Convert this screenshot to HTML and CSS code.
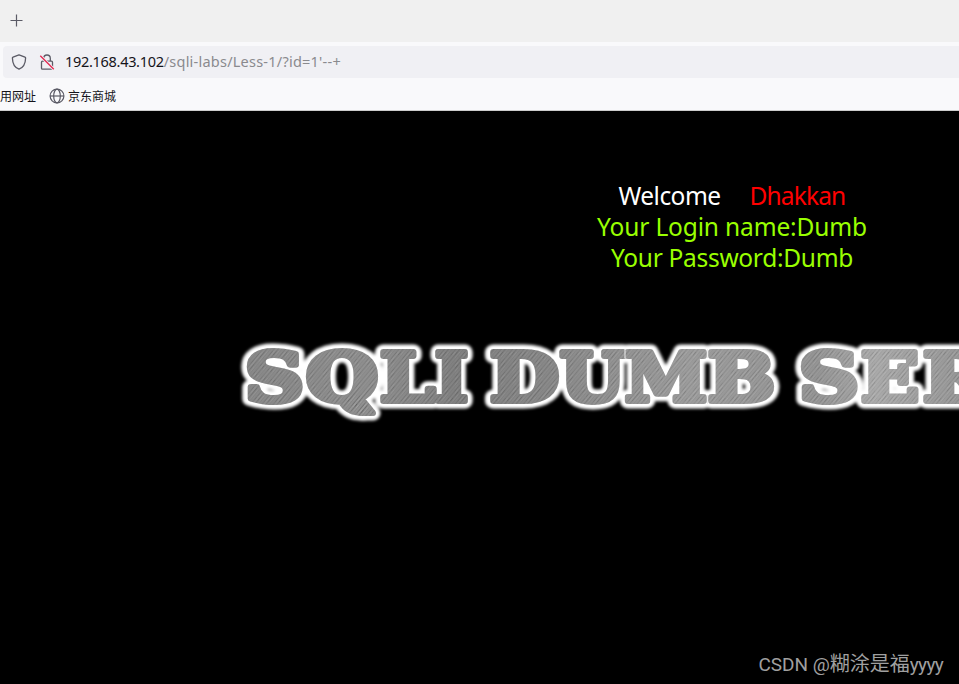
FILE: index.html
```
<!DOCTYPE html>
<html lang="zh-CN">
<head>
<meta charset="utf-8">
<title>Less-1</title>
<link rel="stylesheet" href="styles.css">
</head>
<body>
<div class="tabs">
  <svg class="plus" width="13" height="13" viewBox="0 0 13 13"><path d="M6.500 0.500v12M0.500 6.500h12" fill="none" stroke="#5b5b66" stroke-width="1.200"/></svg>
</div>
<div class="toolbar">
  <div class="urlbar">
    <svg class="shield" width="16" height="16" viewBox="0 0 16 16"><path d="M8 .8 14 3.1q.6.2.6.9C14.500 9.500 12.500 13.500 8 15.200 3.500 13.500 1.500 9.500 1.400 4q0-.7.6-.9Z" fill="none" stroke="#5b5b66" stroke-width="1.3" stroke-linejoin="round"/></svg>
    <svg class="lock" width="16" height="16" viewBox="0 0 16 16"><path d="M4.700 7V4.300a3.300 3.300 0 0 1 6.600 0V7M3.500 7.200h9a1 1 0 0 1 1 1v6a1 1 0 0 1-1 1h-9a1 1 0 0 1-1-1v-6a1 1 0 0 1 1-1Z" fill="none" stroke="#5b5b66" stroke-width="1.300"/><path d="m1.300 1.800 13.500 13.500" stroke="#f0f0f4" stroke-width="3"/><path d="m1.300 1.800 13.500 13.500" stroke="#e22850" stroke-width="1.300"/></svg>
    <div class="url"><span class="host">192.168.43.102</span><span class="path">/sqli-labs/Less-1/?id=1'--+</span></div>
  </div>
</div>
<div class="bookmarks">
  <span>用网址</span>
  <svg class="globe" width="16" height="16" viewBox="0 0 16 16"><g fill="none" stroke="#5b5b66" stroke-width="1.200"><circle cx="8" cy="8" r="6.900"/><ellipse cx="8" cy="8" rx="3.300" ry="6.900"/><path d="M1 8h14"/></g></svg>
  <span>京东商城</span>
</div>
<main class="page">
  <div class="message">
    <div class="line welcome"><span class="hello">Welcome</span><span class="name">Dhakkan</span></div>
    <div class="line login">Your Login name:Dumb</div>
    <div class="line password">Your Password:Dumb</div>
  </div>
  <svg class="banner" width="729" height="100" viewBox="230 330 729 100">
    <defs>
      <linearGradient id="tone" gradientUnits="userSpaceOnUse" x1="246" y1="0" x2="960" y2="0">
        <stop offset="0" stop-color="#858585"/><stop offset=".17" stop-color="#8c8c8c"/><stop offset=".3" stop-color="#7c7c7c"/><stop offset=".42" stop-color="#858585"/><stop offset=".62" stop-color="#9b9b9b"/><stop offset=".8" stop-color="#939393"/><stop offset=".88" stop-color="#aaa"/><stop offset="1" stop-color="#969696"/>
      </linearGradient>
      <pattern id="steel" patternUnits="userSpaceOnUse" width="1000" height="8.700" patternTransform="rotate(-50)">
        <path d="M0 1h1000M0 4.800h1000M0 6.600h1000" stroke="#fff" stroke-opacity=".16" stroke-width=".6"/>
        <path d="M0 2.400h1000M0 5.700h1000M0 8h1000" stroke="#000" stroke-opacity=".14" stroke-width=".6"/>
      </pattern>
      <filter id="soft" x="-10%" y="-40%" width="120%" height="180%"><feGaussianBlur stdDeviation="1.800"/></filter>
      <g id="title" class="title">
        <text x="245" y="401" textLength="59" lengthAdjust="spacingAndGlyphs">S</text>
        <text x="306" y="401" textLength="72" lengthAdjust="spacingAndGlyphs">Q</text>
        <path d="M350 400 361 413H373L364 402 358 398Z"/>
        <text x="380" y="401" textLength="55" lengthAdjust="spacingAndGlyphs">L</text>
        <text x="435" y="401" textLength="33" lengthAdjust="spacingAndGlyphs">I</text>
        <text x="490" y="401" textLength="69" lengthAdjust="spacingAndGlyphs">D</text>
        <text x="560" y="401" textLength="65" lengthAdjust="spacingAndGlyphs">U</text>
        <text x="625" y="401" textLength="82" lengthAdjust="spacingAndGlyphs">M</text>
        <text x="708" y="401" textLength="67" lengthAdjust="spacingAndGlyphs">B</text>
        <text x="799" y="401" textLength="60" lengthAdjust="spacingAndGlyphs">S</text>
        <text x="861" y="401" textLength="58" lengthAdjust="spacingAndGlyphs">E</text>
        <text x="923" y="401" textLength="70" lengthAdjust="spacingAndGlyphs">R</text>
      </g>
    </defs>
    <use href="#title" class="glow" filter="url(#soft)"/>
    <use href="#title" class="edge"/>
    <use href="#title" class="metal"/>
    <use href="#title" class="grain"/>
    <path class="seams" d="M625 349v9M707.500 349v9M707.500 395v9"/>
  </svg>
  <div class="watermark">CSDN @<span class="cjk">糊涂是福</span><span class="tight">yyyy</span></div>
</main>
</body>
</html>
```
FILE: styles.css
```
* { box-sizing: border-box; }
body { margin: 0; width: 959px; height: 684px; overflow: hidden; display: flex; flex-direction: column; background: #000; font-family: "Noto Sans", "Noto Sans CJK SC", sans-serif; }
svg { display: block; flex: none; }
.tabs { height: 42px; flex: none; background: #f0f0f0; padding: 14px 0 0 10px; }
.toolbar { height: 40px; flex: none; background: #f9f9fb; padding: 4px 0 0 3px; }
.urlbar { height: 32px; background: #f0f0f4; border-radius: 4px 0 0 4px; display: flex; align-items: center; padding-left: 8px; }
.lock { margin-left: 12px; }
.url { margin: 0 0 2px 10px; font-size: 14.5px; line-height: 20px; white-space: nowrap; color: #15141a; }
.host { letter-spacing: -0.3px; }
.path { color: #8a8a8e; letter-spacing: 0.23px; }
.bookmarks { height: 29px; flex: none; background: #f9f9fb; border-bottom: 1px solid #ccc; display: flex; align-items: center; font: 12px/18px "Noto Sans CJK SC", sans-serif; color: #15141a; }
.globe { margin: 0 3px 0 13px; }
.page { flex: 1; display: flex; flex-direction: column; color: #fff; }
.message { margin: 69px 0 0 505px; width: 454px; text-align: center; font-size: 24.5px; line-height: 31px; white-space: nowrap; }
.hello { letter-spacing: -0.55px; }
.name { color: #f00; margin-left: 29px; letter-spacing: -0.85px; }
.login, .password { color: #9f0; }
.login { letter-spacing: -0.15px; }
.password { letter-spacing: -0.3px; }
.banner { margin: 57px 0 0 230px; }
.title { font: bold 68px "DejaVu Serif", serif; stroke-linejoin: round; }
.glow { fill: #fff; stroke: #fff; stroke-width: 15px; }
.edge { fill: #fff; stroke: #fff; stroke-width: 9px; }
.metal { fill: url(#tone); stroke: url(#tone); stroke-width: 6px; }
.grain { fill: url(#steel); stroke: url(#steel); stroke-width: 6px; }
.seams { fill: none; stroke: #eee; stroke-width: 1px; }
.watermark { margin: auto 16px 5px auto; font: 19px/28px Roboto, sans-serif; color: #a0a0a0; white-space: nowrap; }
.cjk { font: 20px/28px "Noto Sans CJK SC", sans-serif; }
.tight { letter-spacing: -0.7px; }
```
